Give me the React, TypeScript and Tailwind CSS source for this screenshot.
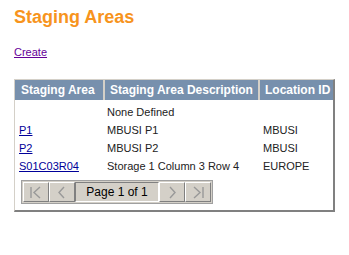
const rows = [
  { code: '', desc: 'None Defined', loc: '' },
  { code: 'P1', desc: 'MBUSI P1', loc: 'MBUSI' },
  { code: 'P2', desc: 'MBUSI P2', loc: 'MBUSI' },
  { code: 'S01C03R04', desc: 'Storage 1 Column 3 Row 4', loc: 'EUROPE' },
]

function PagerButton({ children }: { children: React.ReactNode }) {
  return (
    <div className="flex h-full w-[26px] items-center justify-center border border-t-white border-l-white border-r-[#808080] border-b-[#808080] bg-[#d4d0c8] text-[#999]">
      {children}
    </div>
  )
}

export default function App() {
  return (
    <div className="h-[255px] w-[349px] bg-white pl-[14px] pt-[6px] font-['Liberation_Sans',Arial,sans-serif] text-black">
      <h1 className="text-[18px] font-bold leading-[22px] text-[#f7941d]">Staging Areas</h1>
      <a href="#" className="mt-[18px] block w-fit text-[11px] leading-[13px] text-[#660099] underline">
        Create
      </a>

      <div className="mt-[20px] w-[321px] border-t border-l border-t-[#d4d0c8] border-l-[#d4d0c8] border-r-2 border-b-2 border-r-[#808080] border-b-[#808080] pb-[6px]">
        <div className="flex h-[20px] bg-[#7790ad] text-[12px] font-bold leading-[20px] text-white">
          <div className="w-[88px] pl-[6px]">Staging Area</div>
          <div className="w-[2px] bg-[#d4d0c8]" />
          <div className="w-[153px] pl-[5px]">Staging Area Description</div>
          <div className="w-[2px] bg-[#d4d0c8]" />
          <div className="flex-1 pl-[5px]">Location ID</div>
        </div>

        <div className="pt-[3px]">
          {rows.map((r) => (
            <div key={r.desc} className="flex h-[18px] items-center text-[11px] leading-[13px] text-[#222]">
              <div className="w-[90px] pl-[4px]">
                {r.code && (
                  <a href="#" className="text-[#000099] underline">
                    {r.code}
                  </a>
                )}
              </div>
              <div className="w-[157px] pl-[2px]">{r.desc}</div>
              <div className="flex-1 pl-[1px]">{r.loc}</div>
            </div>
          ))}
        </div>

        <div className="ml-[6px] mt-[5px] flex h-[24px] w-fit border border-[#a0a0a0] bg-[#d4d0c8] p-[1px]">
          <PagerButton>
            <svg width="14" height="13" viewBox="0 0 14 13" fill="none" stroke="currentColor" strokeWidth="1.4">
              <path d="M2 1v11M11 1L5 6.5l6 5.5" />
            </svg>
          </PagerButton>
          <PagerButton>
            <svg width="10" height="13" viewBox="0 0 10 13" fill="none" stroke="currentColor" strokeWidth="1.4">
              <path d="M7 1L2 6.5l5 5.5" />
            </svg>
          </PagerButton>
          <div className="flex h-full w-[84px] items-center justify-center border border-t-[#808080] border-l-[#808080] border-r-white border-b-white bg-[#d4d0c8] text-[12px] text-black">
            Page 1 of 1
          </div>
          <PagerButton>
            <svg width="10" height="13" viewBox="0 0 10 13" fill="none" stroke="currentColor" strokeWidth="1.4">
              <path d="M3 1l5 5.5-5 5.5" />
            </svg>
          </PagerButton>
          <PagerButton>
            <svg width="14" height="13" viewBox="0 0 14 13" fill="none" stroke="currentColor" strokeWidth="1.4">
              <path d="M3 1l6 5.5-6 5.5M12 1v11" />
            </svg>
          </PagerButton>
        </div>
      </div>
    </div>
  )
}
